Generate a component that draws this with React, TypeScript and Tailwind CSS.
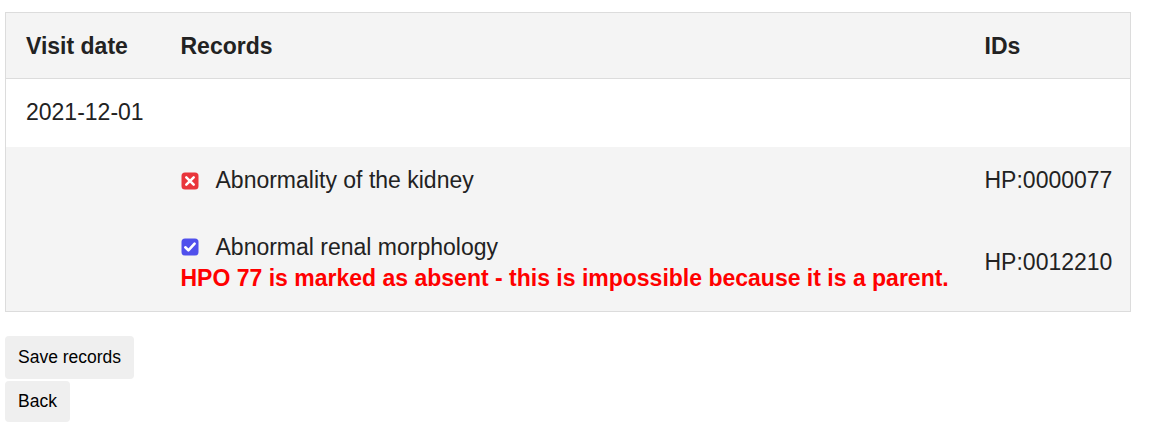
import React from 'react';

type Rec = { label: string; id: string; present: boolean; error?: string };

const records: Rec[] = [
  { label: 'Abnormality of the kidney', id: 'HP:0000077', present: false },
  {
    label: 'Abnormal renal morphology',
    id: 'HP:0012210',
    present: true,
    error: 'HPO 77 is marked as absent - this is impossible because it is a parent.'
  }
];

function Mark({ present }: { present: boolean }) {
  if (present) {
    return (
      <svg width="18" height="18" viewBox="0 0 18 18" className="shrink-0">
        <rect x="0.5" y="0.5" width="17" height="17" rx="3.5" fill="#5050ec" />
        <path d="M4.3 9.3l3.1 3 6.2-6.6" stroke="#fff" strokeWidth="2.6" fill="none" strokeLinecap="round" strokeLinejoin="round" />
      </svg>
    );
  }
  return (
    <svg width="18" height="18" viewBox="0 0 18 18" className="shrink-0">
      <rect x="0.5" y="0.5" width="17" height="17" rx="3.5" fill="#e9353b" />
      <path d="M5.3 5.3l7.4 7.4M12.7 5.3l-7.4 7.4" stroke="#fff" strokeWidth="2.5" strokeLinecap="round" />
    </svg>
  );
}

export default function App(): React.ReactElement {
  return (
    <div className="bg-white px-[5px] pt-3 text-[#222]" style={{ fontFamily: '"Liberation Sans", Arial, sans-serif' }}>
      <table className="w-[1126px] border-collapse border border-[#dcdcdc] text-[23px] leading-[25px]">
        <thead>
          <tr className="bg-[#f4f4f4] border-b border-[#dcdcdc]">
            <th className="w-[175px] px-5 pt-[21px] pb-[19px] text-left font-bold">Visit date</th>
            <th className="px-0 pt-[21px] pb-[19px] text-left font-bold">Records</th>
            <th className="w-[146px] px-0 pt-[21px] pb-[19px] text-left font-bold">IDs</th>
          </tr>
        </thead>
        <tbody>
          <tr className="bg-white">
            <td className="h-[68px] px-5 align-middle">2021-12-01</td>
            <td />
            <td />
          </tr>
          {records.map((r) => (
            <tr key={r.id} className="bg-[#f4f4f4]">
              <td />
              <td className={r.error ? 'h-[97px]' : 'h-[68px]'}>
                <div className="flex items-center gap-[17px]">
                  <Mark present={r.present} />
                  <span>{r.label}</span>
                </div>
                {r.error && (
                  <div className="mt-[6px] font-bold leading-[25px] text-[#ff0000]">{r.error}</div>
                )}
              </td>
              <td className="align-middle">{r.id}</td>
            </tr>
          ))}
        </tbody>
      </table>
      <div className="mt-6 flex flex-col items-start gap-[2px] text-[17.5px]">
        <button className="h-[43px] rounded bg-[#efefef] px-[13px] text-black">Save records</button>
        <button className="h-[41px] rounded bg-[#efefef] px-[13px] text-black">Back</button>
      </div>
    </div>
  );
}
